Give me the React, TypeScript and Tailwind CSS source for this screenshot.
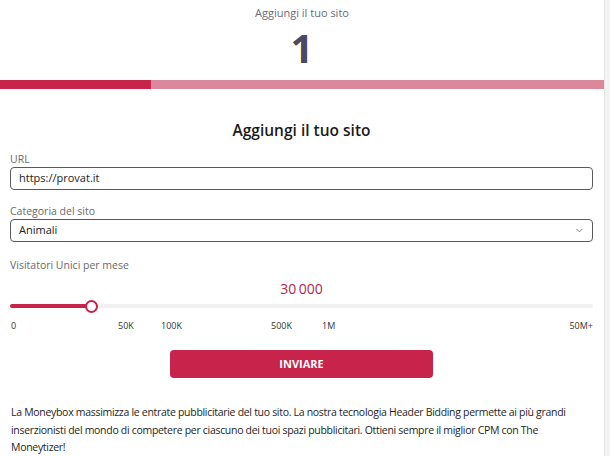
import { ChevronDown } from "lucide-react"

const ticks = [
  { label: "0", left: "left-[1px]" },
  { label: "50K", left: "left-[108px]" },
  { label: "100K", left: "left-[151px]" },
  { label: "500K", left: "left-[261px]" },
  { label: "1M", left: "left-[312px]" },
]

export default function App() {
  return (
    <div className="w-full h-[456px] overflow-hidden bg-[#f3f3f3] font-['Open_Sans',sans-serif]">
      <div className="w-[605px] h-full bg-white border-r border-[#e4e4e4]">
        {/* step header */}
        <div className="flex flex-col items-center pt-[5px]">
          <div className="text-[11px] leading-[16px] text-[#6b6b78]">Aggiungi il tuo sito</div>
          <div className="mt-[7px] text-[40px] leading-[40px] font-bold text-[#4a4a62]">1</div>
        </div>
        <div className="mt-[12px] flex h-[9px]">
          <div className="w-[151px] bg-[#c8234a]" />
          <div className="flex-1 bg-[#dc889c]" />
        </div>

        {/* form */}
        <div className="px-[10px] pr-[11px]">
          <h2 className="mt-[31px] text-center text-[15.5px] leading-[20px] font-semibold text-[#1b1b1b]">
            Aggiungi il tuo sito
          </h2>

          <label className="block mt-[12px] text-[10.5px] leading-[15px] text-[#6a6a6a]">URL</label>
          <div className="h-[23px] flex items-center px-[8px] border border-[#5a5a5a] rounded-[4px] text-[11px] font-medium text-[#222]">
            https://provat.it
          </div>

          <label className="block mt-[14px] text-[10.5px] leading-[15px] text-[#6a6a6a]">Categoria del sito</label>
          <div className="h-[23px] flex items-center justify-between pl-[8px] pr-[7px] border border-[#5a5a5a] rounded-[4px] text-[11px] font-medium text-[#222]">
            <span>Animali</span>
            <ChevronDown size={11} strokeWidth={1.6} className="text-[#555]" />
          </div>

          <div className="mt-[16px] text-[10.5px] leading-[15px] text-[#6a6a6a]">Visitatori Unici per mese</div>
          <div className="mt-[6px] text-center text-[14px] leading-[20px] text-[#b3264f]">30&#8201;000</div>

          {/* slider */}
          <div className="relative h-[14px] flex items-center">
            <div className="w-full h-[4px] rounded-full bg-[#f1f1f1]" />
            <div className="absolute left-0 w-[81px] h-[4px] rounded-full bg-[#c8234a]" />
            <div className="absolute left-[75px] w-[13px] h-[13px] rounded-full bg-white border-2 border-[#c8234a]" />
          </div>

          {/* ticks */}
          <div className="relative mt-[7px] h-[12px] text-[9px] leading-[12px] text-[#333]">
            {ticks.map((t) => (
              <span key={t.label} className={`absolute top-0 ${t.left}`}>
                {t.label}
              </span>
            ))}
            <span className="absolute top-0 right-0">50M+</span>
          </div>

          <div className="mt-[18px] flex justify-center">
            <button className="w-[263px] h-[28px] rounded-[4px] bg-[#c8234a] text-white text-[11px] font-bold">
              INVIARE
            </button>
          </div>

          <p className="mt-[26px] pl-[1px] text-[10.5px] leading-[17.5px] tracking-[-0.3px] text-[#1e1e1e] whitespace-nowrap">
            La Moneybox massimizza le entrate pubblicitarie del tuo sito. La nostra tecnologia Header Bidding permette ai più grandi
            <br />
            inserzionisti del mondo di competere per ciascuno dei tuoi spazi pubblicitari. Ottieni sempre il miglior CPM con The
            <br />
            Moneytizer!
          </p>
        </div>
      </div>
    </div>
  )
}
